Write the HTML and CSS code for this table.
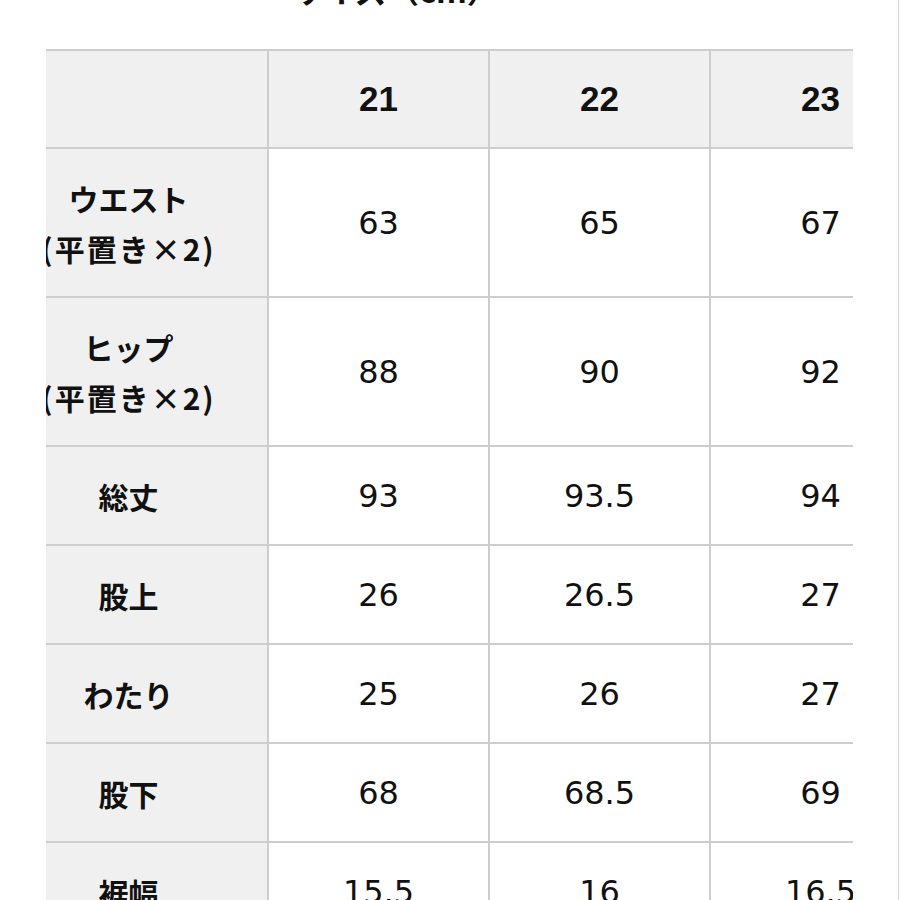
FILE: index.html
```html
<!DOCTYPE html>
<html lang="ja">
<head>
<meta charset="utf-8">
<link rel="stylesheet" href="styles.css">
</head>
<body>
<div class="page">
  <div class="sheet">
    <div class="title">サイズ（cm）</div>
    <table class="size-table">
      <colgroup>
        <col class="c-label"><col class="c-val"><col class="c-val"><col class="c-val"><col class="c-val">
      </colgroup>
      <tr class="r-head">
        <th class="label"></th><th>21</th><th>22</th><th>23</th><th>24</th>
      </tr>
      <tr class="r-tall">
        <th class="label"><span class="ln">ウエスト</span><span class="ln wide">(平置き×2)</span></th><td>63</td><td>65</td><td>67</td><td>69</td>
      </tr>
      <tr class="r-tall">
        <th class="label"><span class="ln">ヒップ</span><span class="ln wide">(平置き×2)</span></th><td>88</td><td>90</td><td>92</td><td>94</td>
      </tr>
      <tr class="r-std">
        <th class="label">総丈</th><td>93</td><td>93.5</td><td>94</td><td>94.5</td>
      </tr>
      <tr class="r-std">
        <th class="label">股上</th><td>26</td><td>26.5</td><td>27</td><td>27.5</td>
      </tr>
      <tr class="r-std">
        <th class="label">わたり</th><td>25</td><td>26</td><td>27</td><td>28</td>
      </tr>
      <tr class="r-std">
        <th class="label">股下</th><td>68</td><td>68.5</td><td>69</td><td>69.5</td>
      </tr>
      <tr class="r-std">
        <th class="label">裾幅</th><td>15.5</td><td>16</td><td>16.5</td><td>17</td>
      </tr>
    </table>
  </div>
  <div class="rest"></div>
  <div class="edge"></div>
</div>
</body>
</html>
```
FILE: styles.css
```css
html, body {
  margin: 0;
  padding: 0;
  background: #ffffff;
}
.page {
  display: flex;
  width: 900px;
  height: 900px;
  overflow: hidden;
}
.sheet {
  flex: none;
  margin-left: 46px;
  width: 807px;
  height: 900px;
  overflow: hidden;
}
.rest {
  flex: 1;
}
.edge {
  flex: none;
  width: 1px;
  margin-right: 1px;
  background: #d2d2d2;
}
.title {
  margin-top: -27px;
  height: 32px;
  line-height: 32px;
  padding-left: 246px;
  font-family: "Noto Sans CJK JP", sans-serif;
  font-weight: 700;
  font-size: 32px;
  color: #111;
  white-space: nowrap;
}
.size-table {
  margin-top: 44px;
  margin-left: -58px;
  border-collapse: collapse;
  table-layout: fixed;
  width: 1163px;
}
.c-label { width: 279px; }
.c-val { width: 221px; }
.size-table th,
.size-table td {
  border: 2px solid #cdcdcd;
  padding: 0;
  text-align: center;
  vertical-align: middle;
  color: #111;
  white-space: nowrap;
  overflow: hidden;
}
.size-table td {
  font-family: "DejaVu Sans", sans-serif;
  font-size: 32px;
  font-weight: 400;
  background: #ffffff;
}
.size-table th {
  font-family: "Liberation Sans", "Noto Sans CJK JP", sans-serif;
  font-size: 35px;
  font-weight: 700;
  background: #f0f0f0;
}
.size-table th.label {
  font-family: "Noto Sans CJK JP", sans-serif;
  font-size: 30px;
  font-weight: 700;
  background: #f0f0f0;
}
.r-head { height: 98px; }
.r-tall { height: 149px; }
.r-std { height: 99px; }
.ln {
  display: block;
  line-height: 50px;
}
.wide {
  letter-spacing: 2px;
}
```
